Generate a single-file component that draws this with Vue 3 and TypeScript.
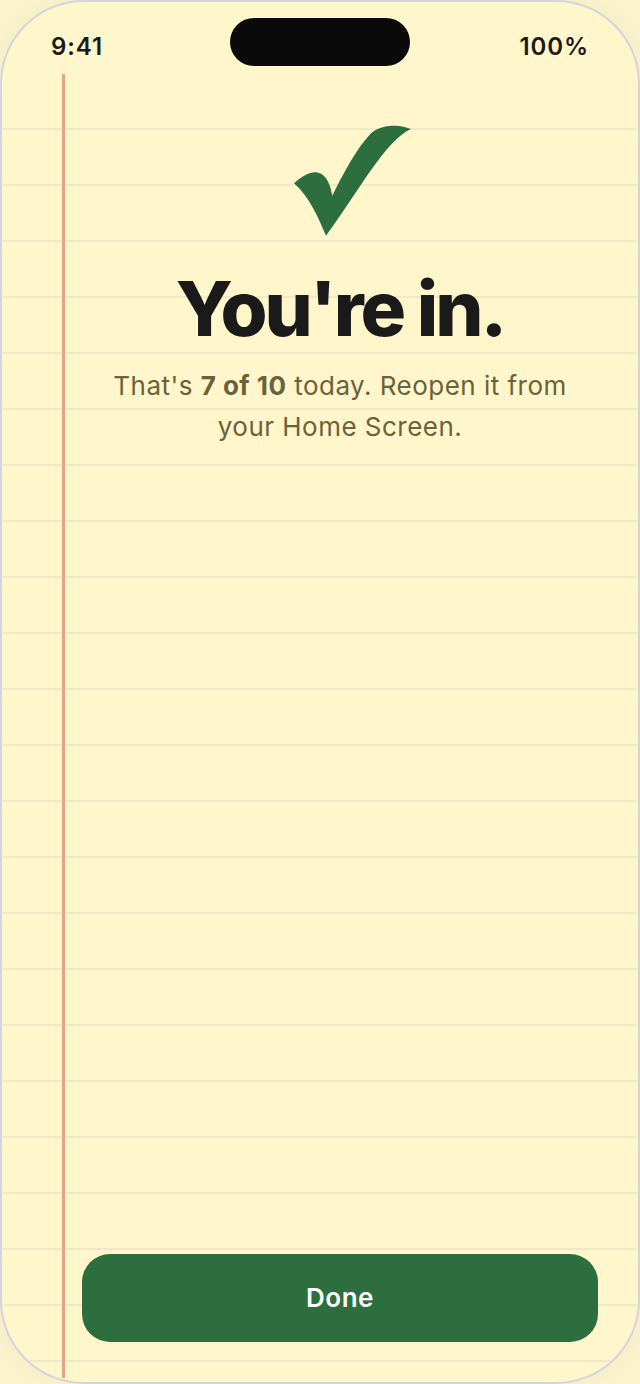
<template>
  <div class="phone">
    <header class="status">
      <span>9:41</span>
      <div class="island"></div>
      <span>100%</span>
    </header>
    <main class="paper">
      <div class="margin-line"></div>
      <div class="content">
        <svg class="check" viewBox="269 125 142 111" aria-hidden="true">
          <path d="M294 183.3C300 178 308 172.3 315 172.3C322 172.3 329.5 178 332.3 195.7C342 176 356 149 371 133.3C378 127 387 125.7 395 125.7C401 125.7 406 127 410.7 129C385 141 359 191 326 235.7C319 219 309 196 294 183.3Z" />
        </svg>
        <h1>You're in.</h1>
        <p>That's <strong>7 of 10</strong> today. Reopen it from your Home Screen.</p>
      </div>
      <button class="done" type="button">Done</button>
    </main>
  </div>
</template>

<script setup lang="ts">
</script>

<style>
html, body {
  margin: 0;
  background: #fbf3ce;
}
</style>

<style scoped>
.phone {
  position: relative;
  box-sizing: border-box;
  width: 640px;
  height: 1384px;
  display: flex;
  flex-direction: column;
  overflow: hidden;
  border: 2px solid #d3d5de;
  border-radius: 84px;
  box-shadow: 0 0 24px rgba(120, 100, 40, 0.06);
  font-family: Inter, "Liberation Sans", sans-serif;
  color: #1a1a1a;
  background-color: #fff6cc;
}

.status {
  height: 72px;
  flex: none;
  display: flex;
  justify-content: space-between;
  padding: 16px 49px 0;
  box-sizing: border-box;
  font-size: 24px;
  font-weight: 600;
  letter-spacing: 0.9px;
  line-height: 58px;
}

.island {
  position: absolute;
  top: 16px;
  left: 228px;
  width: 180px;
  height: 48px;
  border-radius: 24px;
  background: #0a0a0a;
}

.paper {
  position: relative;
  flex: 1;
  display: flex;
  flex-direction: column;
  margin-bottom: 4px;
  padding: 0 40px 36px 80px;
  background-image: repeating-linear-gradient(
    to bottom,
    transparent 0,
    transparent 54px,
    #efe8c9 54px,
    #efe8c9 56px
  );
}

.margin-line {
  position: absolute;
  top: 0;
  bottom: 0;
  left: 60px;
  width: 3px;
  background: #dfa688;
}

.content {
  flex: 1;
  display: flex;
  flex-direction: column;
  align-items: center;
  text-align: center;
}

.check {
  flex: none;
  width: 142px;
  height: 111px;
  margin-top: 51px;
  fill: #2d6e3e;
}

h1 {
  margin: 30px 0 0;
  font-size: 76px;
  line-height: 84px;
  font-weight: 800;
  letter-spacing: -3px;
}

p {
  margin: 15px 0 0;
  padding: 0 24px;
  font-size: 26px;
  line-height: 41px;
  letter-spacing: 0.47px;
  color: #6b6238;
}

strong {
  font-weight: 700;
}

.done {
  flex: none;
  height: 88px;
  padding: 0 0 2px;
  border: 0;
  border-radius: 28px;
  background: #2d6e3e;
  color: #fff;
  font: 600 26px Inter, "Liberation Sans", sans-serif;
  letter-spacing: 0.5px;
}
</style>
